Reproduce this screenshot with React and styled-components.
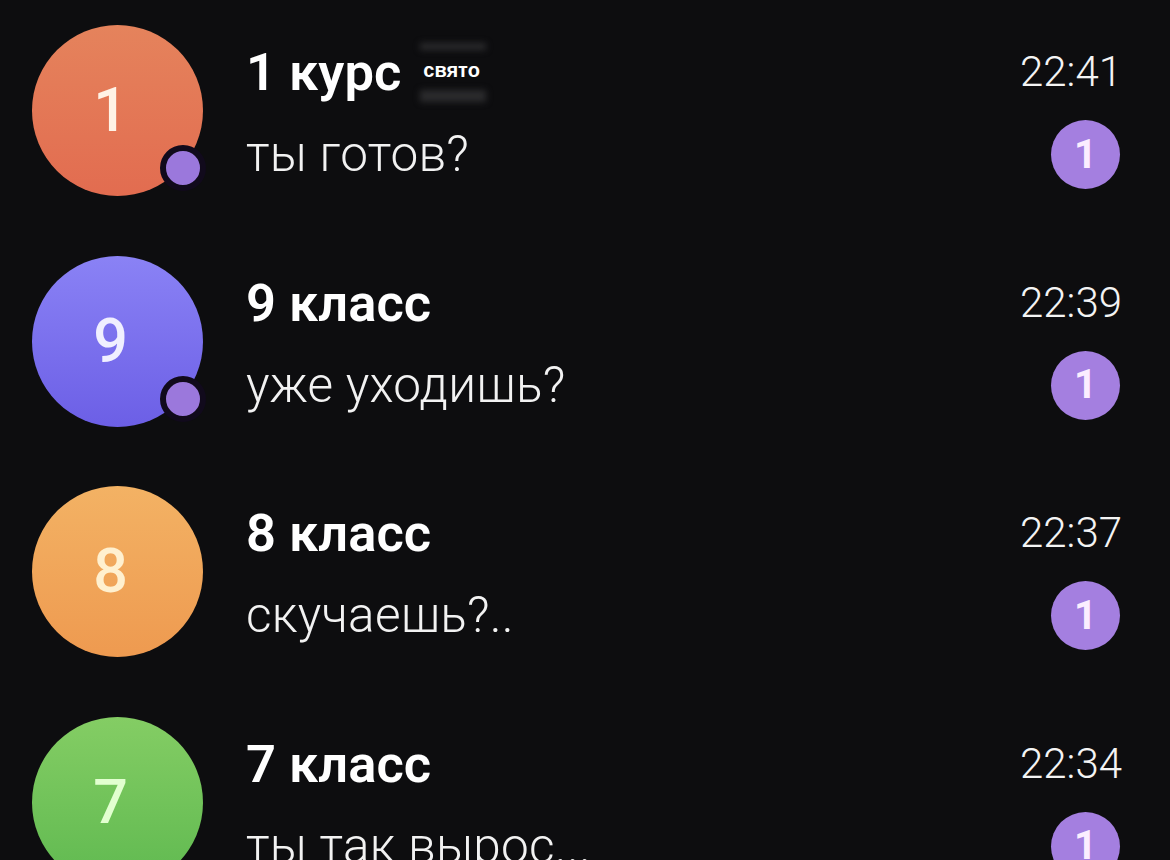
import React from 'react';
import styled, { createGlobalStyle } from 'styled-components';

const GlobalStyle = createGlobalStyle`
  html, body {
    margin: 0;
    padding: 0;
    height: 100%;
    overflow: hidden;
    background-color: #0d0d0f;
  }
`;

const Screen = styled.div`
  width: 1170px;
  height: 860px;
  overflow: hidden;
  background-color: #0d0d0f;
  font-family: Roboto, "Noto Sans", sans-serif;
`;

const ChatList = styled.div`
  display: flex;
  flex-direction: column;
  gap: 60.5px;
  padding: 25px 46px 0 32px;
`;

const ChatRow = styled.div`
  display: flex;
  align-items: flex-start;
  height: 170px;
`;

const Avatar = styled.div`
  position: relative;
  flex: none;
  width: 171px;
  height: 171px;
  padding-right: 14px;
  box-sizing: border-box;
  border-radius: 50%;
  display: flex;
  align-items: center;
  justify-content: center;
  background: linear-gradient(180deg, ${(props) => props.$from}, ${(props) => props.$to});
  color: ${(props) => props.$digit};
  font-size: 61px;
  font-weight: 500;
  line-height: 1;
`;

const OnlineDot = styled.span`
  position: absolute;
  left: 128px;
  top: 120px;
  width: 34px;
  height: 34px;
  border: 6px solid #110a1c;
  border-radius: 50%;
  background-color: #9b78dc;
`;

const ChatBody = styled.div`
  flex: 1;
  display: flex;
  flex-direction: column;
  margin-left: 43px;
  padding-top: 18px;
`;

const TitleLine = styled.div`
  display: flex;
  align-items: center;
  height: 58px;
`;

const ChatTitle = styled.span`
  color: #ffffff;
  font-size: 52.5px;
  font-weight: 600;
`;

const StatusTag = styled.span`
  position: relative;
  margin-left: 22px;
  margin-top: -4px;
  color: #ffffff;
  font-family: "Liberation Sans", sans-serif;
  font-size: 20px;
  font-weight: 700;

  &::before,
  &::after {
    content: '';
    position: absolute;
    left: -3px;
    right: -6px;
    background-color: #2b2b2d;
    filter: blur(3px);
  }

  &::before {
    top: -16px;
    height: 7px;
  }

  &::after {
    top: 31px;
    height: 12px;
  }
`;

const ChatMessage = styled.div`
  margin-top: 24px;
  color: #f2f2f2;
  font-size: 49.5px;
  font-weight: 300;
  line-height: 58px;
  letter-spacing: 0.25px;
  white-space: nowrap;
`;

const ChatMeta = styled.div`
  flex: none;
  width: 104px;
  display: flex;
  flex-direction: column;
  align-items: flex-end;
  padding-top: 20px;
`;

const ChatTime = styled.div`
  align-self: flex-start;
  color: #f4f4f4;
  font-size: 42px;
  font-weight: 300;
  line-height: 54px;
  white-space: nowrap;
`;

const UnreadBadge = styled.div`
  width: 69px;
  height: 69px;
  margin-top: 21px;
  margin-right: 4px;
  border-radius: 50%;
  display: flex;
  align-items: center;
  justify-content: center;
  background-color: #a47fe0;
  color: #fbeeff;
  font-size: 40px;
  font-weight: 700;
  line-height: 1;
`;

const chats = [
  { id: 1, digit: '1', title: '1 курс', tag: 'свято', message: 'ты готов?', time: '22:41', from: '#e5835c', to: '#e26c50', ink: '#fff3e6', dot: true },
  { id: 2, digit: '9', title: '9 класс', message: 'уже уходишь?', time: '22:39', from: '#8a82f5', to: '#6c5fe6', ink: '#f0efff', dot: true },
  { id: 3, digit: '8', title: '8 класс', message: 'скучаешь?..', time: '22:37', from: '#f3b264', to: '#ee9a50', ink: '#fff0cf' },
  { id: 4, digit: '7', title: '7 класс', message: 'ты так вырос...', time: '22:34', from: '#84cd64', to: '#5fb950', ink: '#e2ffd0' },
];

const App = () => {
  return (
    <Screen>
      <GlobalStyle />
      <ChatList>
        {chats.map((chat) => (
          <ChatRow key={chat.id}>
            <Avatar $from={chat.from} $to={chat.to} $digit={chat.ink}>
              {chat.digit}
              {chat.dot && <OnlineDot />}
            </Avatar>
            <ChatBody>
              <TitleLine>
                <ChatTitle>{chat.title}</ChatTitle>
                {chat.tag && <StatusTag>{chat.tag}</StatusTag>}
              </TitleLine>
              <ChatMessage>{chat.message}</ChatMessage>
            </ChatBody>
            <ChatMeta>
              <ChatTime>{chat.time}</ChatTime>
              <UnreadBadge>1</UnreadBadge>
            </ChatMeta>
          </ChatRow>
        ))}
      </ChatList>
    </Screen>
  );
};

export default App;
